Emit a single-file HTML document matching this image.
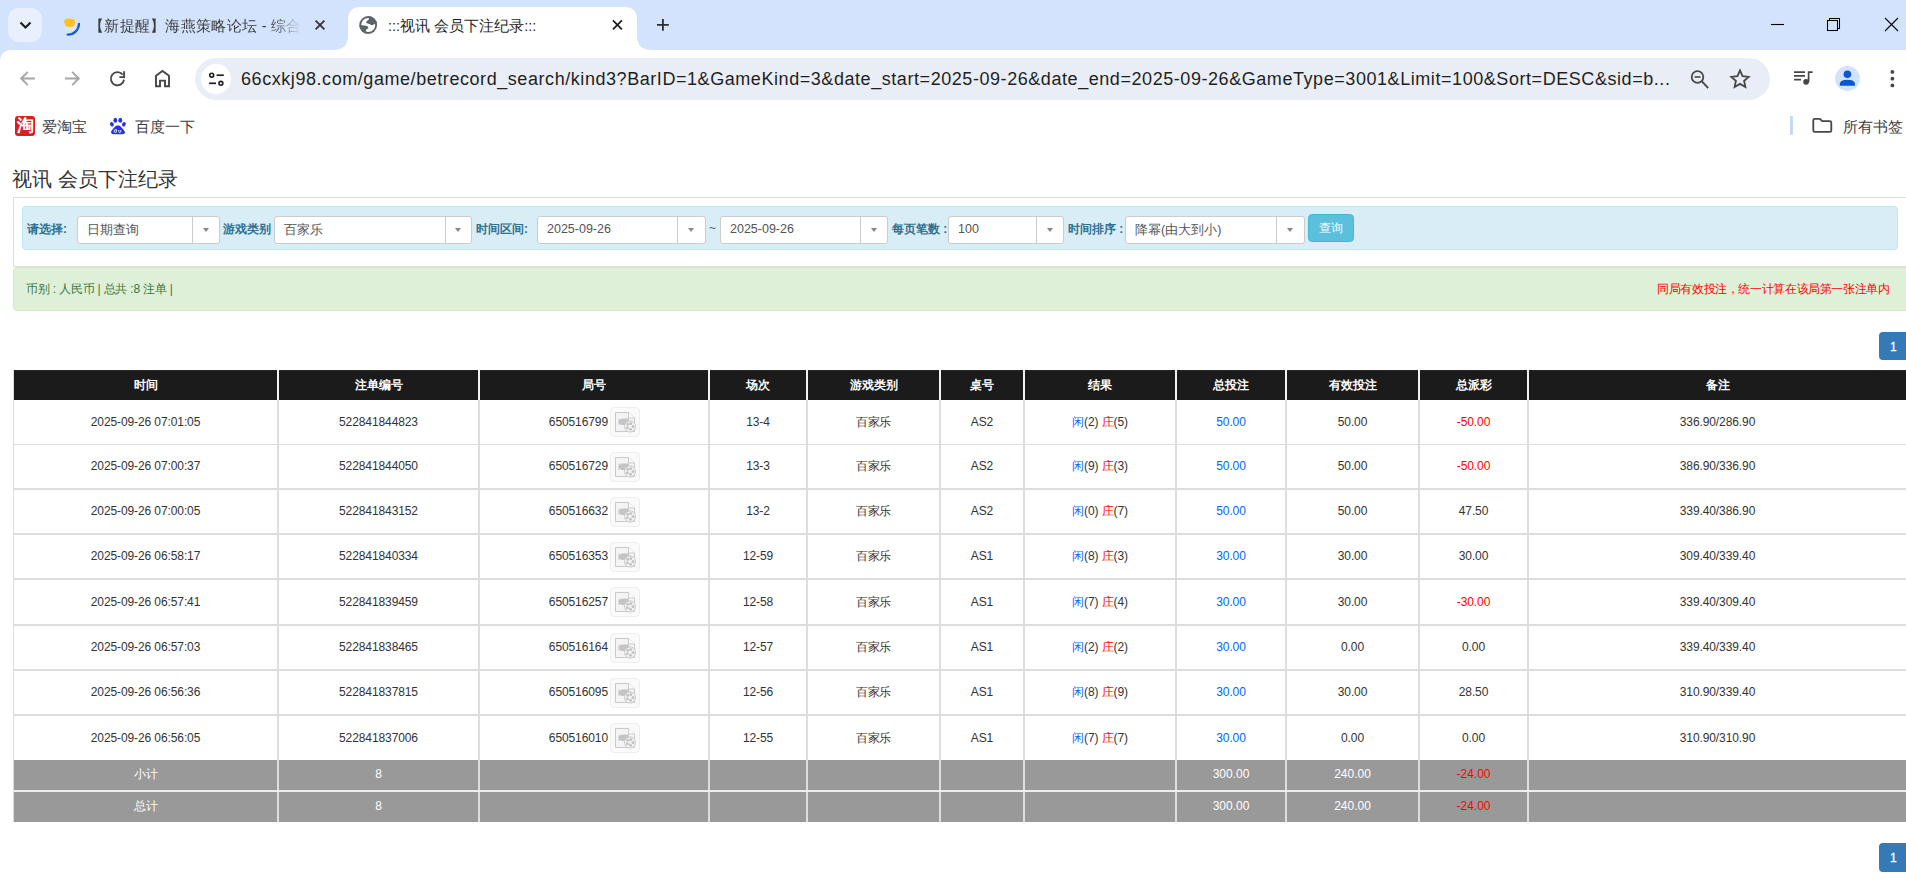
<!DOCTYPE html>
<html><head><meta charset="utf-8">
<style>
*{box-sizing:border-box}
html,body{margin:0;padding:0;width:1906px;height:885px;overflow:hidden;background:#fff;font-family:"Liberation Sans",sans-serif}
.a{position:absolute;white-space:nowrap}
#tabs{position:absolute;left:0;top:0;width:1906px;height:60px;background:#d3e3fd}
#tbar{position:absolute;left:0;top:50px;width:1906px;height:95px;background:#fff;border-top-left-radius:10px}
svg{position:absolute;overflow:visible}
.lbl{font-size:12px;font-weight:bold;color:#31708f}
.sel{top:216px;height:28px;border:1px solid #ccc;border-radius:3px;background:#fff}
.sel .st{position:absolute;left:9px;top:5px;font-size:12.5px;color:#555;white-space:nowrap}
.sel i{position:absolute;top:0;width:1px;height:26px;background:#ccc}
.sel b{position:absolute;top:11px;width:0;height:0;border-left:3.5px solid transparent;border-right:3.5px solid transparent;border-top:4px solid #888}
.hd{height:30px;line-height:30px;text-align:center;font-size:12px;font-weight:bold;color:#fff;background:#1b1b1b;box-shadow:inset 0 1px 0 #262626}
.cl{background:#fff}
.td{text-align:center;font-size:12px;color:#333;letter-spacing:-0.1px}
.ft{text-align:center;font-size:12px;color:#fff}
.ic{width:30px;height:30px;border:1px solid #eee;border-radius:4px;background:#fafafa}

</style></head><body>
<!-- TAB STRIP -->
<div id="tabs">
  <div class="a" style="left:8px;top:8px;width:34px;height:34px;border-radius:11px;background:#e9f0fd"></div>
  <svg style="left:0;top:0" width="60" height="50"><path d="M20.5 22.5 L25.5 27.5 L30.5 22.5" fill="none" stroke="#1f1f1f" stroke-width="2.2"/></svg>
  <!-- tab1 favicon -->
  <svg style="left:0;top:0" width="90" height="50">
    <path d="M64.5 24 Q64.5 21 68 21 L72.5 21 Q75.5 21 75.5 24 L75.5 29 Q75.5 31 72.5 31 L67.5 31 Q64.5 31 64.5 29 Z" fill="#dfe6f0"/>
    <path d="M64.2 22 Q63.8 19 67.5 18.8 Q71 18.5 73.5 19.2 Q75.6 20 75 23.5 Q74.5 26.5 71 27 Q67.5 27.3 65.8 26 Q64.3 24.5 64.2 22Z" fill="#fcc21b"/>
    <path d="M79 23.8 A11 11 0 0 1 67.6 34.6" fill="none" stroke="#1a5ad8" stroke-width="2.3" stroke-linecap="round"/>
  </svg>
  <div class="a" style="left:89px;top:17px;font-size:14.6px;letter-spacing:0.3px;color:#3c3c3c;width:212px;overflow:hidden;-webkit-mask-image:linear-gradient(90deg,#000 86%,transparent 100%)">【新提醒】海燕策略论坛 - 综合讨论区</div>
  <svg style="left:0;top:0" width="340" height="50"><path d="M315.6 20.6 L324.4 29.4 M324.4 20.6 L315.6 29.4" stroke="#333" stroke-width="1.8"/></svg>
  <!-- active tab -->
  <svg style="left:0;top:0" width="700" height="50"><path d="M332 50 Q348 50 348 36 L348 20 Q348 7 361 7 L624 7 Q637 7 637 20 L637 36 Q637 50 652 50 Z" fill="#fff"/></svg>
  <svg style="left:359px;top:16px" width="18.4" height="18" viewBox="0 0 18.4 18">
    <defs><clipPath id="gc"><circle cx="9.2" cy="9" r="8.9"/></clipPath></defs>
    <circle cx="9.2" cy="9" r="8.9" fill="#5f6368"/>
    <circle cx="9.2" cy="9" r="7" fill="#fff"/>
    <g clip-path="url(#gc)" fill="#5f6368">
      <path d="M10.2 0 L10 2.5 Q9.9 4 8.6 4.5 Q7.2 5.2 7.2 6.3 Q7.3 7.4 8.6 7.6 Q10.5 7.9 11.4 8.6 Q12.3 9.5 13.5 9.1 Q15.5 8.4 18.4 6.5 L18.4 0 Z"/>
      <path d="M0 9.1 L2.2 9.3 Q6.5 9.4 8 9.9 Q9.4 10.6 9.3 11.8 Q9.2 12.8 7.8 13.2 Q6.8 13.6 6.8 14.6 Q6.9 15.5 7.4 16.2 L7.6 18 L0 18 Z"/>
    </g>
  </svg>
  <div class="a" style="left:388px;top:17px;font-size:14.6px;color:#1f1f1f">:::视讯 会员下注纪录:::</div>
  <svg style="left:0;top:0" width="700" height="50"><path d="M612.9 20.3 L621.9 29.3 M621.9 20.3 L612.9 29.3" stroke="#1f1f1f" stroke-width="1.8"/>
  <path d="M657 24.9 L668.8 24.9 M662.9 19 L662.9 30.8" stroke="#2d2d2d" stroke-width="1.8"/></svg>
  <!-- window controls -->
  <svg style="left:0;top:0" width="1906" height="50">
    <path d="M1771 24.5 L1784 24.5" stroke="#000" stroke-width="1.1"/>
    <rect x="1827.5" y="20.5" width="10" height="10" fill="none" stroke="#000" stroke-width="1.05"/>
    <path d="M1829.5 20.5 L1829.5 18.5 L1839.5 18.5 L1839.5 28.5 L1837.5 28.5" fill="none" stroke="#000" stroke-width="1.05"/>
    <path d="M1885 18 L1898 31 M1898 18 L1885 31" stroke="#000" stroke-width="1.1"/>
  </svg>
</div>
<!-- TOOLBAR -->
<div id="tbar">
  <svg style="left:0;top:0" width="1906" height="95">
    <!-- back -->
    <path d="M35 28.5 L21.2 28.5 M27.8 21.9 L21.2 28.5 L27.8 35.1" fill="none" stroke="#a6a6a6" stroke-width="1.9"/>
    <!-- forward -->
    <path d="M65 28.5 L78.8 28.5 M72.2 21.9 L78.8 28.5 L72.2 35.1" fill="none" stroke="#a6a6a6" stroke-width="1.9"/>
    <!-- reload -->
    <path d="M124.04 29.62 A6.6 6.6 0 1 1 122.63 24.55" fill="none" stroke="#474747" stroke-width="1.9"/>
    <path d="M124.1 21.3 L124.1 27.1 L119.4 27.1" fill="none" stroke="#474747" stroke-width="1.9"/>
    <!-- home -->
    <path d="M156 36.3 L156 25.8 L162.5 21 L169 25.8 L169 36.3 L165 36.3 L165 30.6 L160 30.6 L160 36.3 Z" fill="none" stroke="#474747" stroke-width="1.9" stroke-linejoin="miter"/>
  </svg>
  <div class="a" style="left:195px;top:8px;width:1575px;height:42px;border-radius:21px;background:#e9eef6"></div>
  <div class="a" style="left:201px;top:14px;width:30px;height:30px;border-radius:15px;background:#fff"></div>
  <svg style="left:0;top:0" width="1906" height="95">
    <circle cx="211.7" cy="25.2" r="1.95" fill="none" stroke="#1f1f1f" stroke-width="1.6"/>
    <path d="M216.6 25.2 L223.8 25.2" stroke="#1f1f1f" stroke-width="1.7"/>
    <circle cx="220.9" cy="33.3" r="1.95" fill="none" stroke="#1f1f1f" stroke-width="1.6"/>
    <path d="M209.1 33.3 L216 33.3" stroke="#1f1f1f" stroke-width="1.7"/>
  </svg>
  <div class="a" style="left:241px;top:19px;font-size:18px;color:#1f1f1f;letter-spacing:0.56px" id="url">66cxkj98.com/game/betrecord_search/kind3?BarID=1&amp;GameKind=3&amp;date_start=2025-09-26&amp;date_end=2025-09-26&amp;GameType=3001&amp;Limit=100&amp;Sort=DESC&amp;sid=b...</div>
  <svg style="left:0;top:0" width="1906" height="95">
    <!-- zoom out -->
    <circle cx="1697.5" cy="27" r="5.8" fill="none" stroke="#474747" stroke-width="1.8"/>
    <path d="M1694.5 27 L1700.5 27" stroke="#474747" stroke-width="1.6"/>
    <path d="M1701.7 31.2 L1708.2 38.2" stroke="#474747" stroke-width="1.9"/>
    <!-- star -->
    <path d="M1740.0 20.4 L1742.5 26.1 L1748.7 26.8 L1744.1 30.9 L1745.4 37.0 L1740.0 33.9 L1734.6 37.0 L1735.9 30.9 L1731.3 26.8 L1737.5 26.1 Z" fill="none" stroke="#474747" stroke-width="1.8" stroke-linejoin="miter"/>
    <!-- media -->
    <path d="M1794 22.1 L1805 22.1 M1794 25.9 L1805 25.9 M1794 29.7 L1801 29.7" stroke="#474747" stroke-width="1.7"/>
    <path d="M1808.6 32 L1808.6 21.3 M1808 22.1 L1812.6 22.1" fill="none" stroke="#474747" stroke-width="1.7"/>
    <circle cx="1806.1" cy="31.8" r="2.9" fill="#474747"/>
    <!-- avatar -->
    <circle cx="1847.5" cy="28.5" r="12.5" fill="#d3e3fd"/>
    <circle cx="1847.4" cy="24.2" r="3.8" fill="#0b57d0"/>
    <path d="M1839.8 35.8 L1839.8 33.6 Q1840.3 29.8 1847.4 29.8 Q1854.5 29.8 1855 33.6 L1855 35.8 Z" fill="#0b57d0"/>
    <!-- menu -->
    <circle cx="1892.4" cy="21.9" r="1.9" fill="#474747"/>
    <circle cx="1892.4" cy="28.7" r="1.9" fill="#474747"/>
    <circle cx="1892.4" cy="35.4" r="1.9" fill="#474747"/>
  </svg>
  <!-- bookmarks -->
  <div class="a" style="left:15px;top:66px;width:20px;height:20px;border-radius:3px;background:#d81e28"></div>
  <div class="a" style="left:15px;top:64px;width:20px;height:20px;font-size:17px;line-height:24px;text-align:center;color:#fff;font-weight:bold">淘</div>
  <div class="a" style="left:42px;top:68px;font-size:15px;color:#3c3c3c">爱淘宝</div>
  <svg style="left:0;top:0" width="300" height="95">
    <ellipse cx="115.3" cy="70.2" rx="1.9" ry="2.5" fill="#2932e1"/>
    <ellipse cx="120.3" cy="70.2" rx="1.9" ry="2.5" fill="#2932e1"/>
    <ellipse cx="111.9" cy="74.3" rx="1.8" ry="2.3" fill="#2932e1" transform="rotate(-25 111.9 74.3)"/>
    <ellipse cx="123.9" cy="74.3" rx="1.8" ry="2.3" fill="#2932e1" transform="rotate(25 123.9 74.3)"/>
    <path d="M117.9 75.3 Q115.5 75.3 113.8 78 Q111 81 111 82.5 Q111 84.3 113.5 84.3 L122.5 84.3 Q125 84.3 125 82.5 Q125 81 122 78 Q120.3 75.3 117.9 75.3Z" fill="#2932e1"/>
    <path d="M116.3 79 L116.3 82.3 M116.3 82.3 A1.4 1.4 0 1 1 116.3 80 M118.8 80 L118.8 81.6 Q118.8 82.5 119.8 82.5 Q120.8 82.5 120.8 81.6 L120.8 80" fill="none" stroke="#fff" stroke-width="0.9"/>
  </svg>
  <div class="a" style="left:135px;top:68px;font-size:15px;color:#3c3c3c">百度一下</div>
  <div class="a" style="left:1790px;top:66px;width:2.5px;height:19px;border-radius:1px;background:#c7d7f7"></div>
  <svg style="left:0;top:0" width="1906" height="95">
    <path d="M1813.3 70.3 Q1813.3 68.8 1814.8 68.8 L1820 68.8 L1822.2 71.2 L1829.8 71.2 Q1831.3 71.2 1831.3 72.7 L1831.3 80.4 Q1831.3 81.9 1829.8 81.9 L1814.8 81.9 Q1813.3 81.9 1813.3 80.4 Z" fill="none" stroke="#474747" stroke-width="1.8" stroke-linejoin="round"/>
  </svg>
  <div class="a" style="left:1843px;top:68px;font-size:15px;color:#3c3c3c">所有书签</div>
</div>
<!-- PAGE -->
<div class="a" id="ttl" style="left:12px;top:166px;font-size:20px;color:#333">视讯 会员下注纪录</div>
<div class="a" style="left:13px;top:197px;width:1910px;height:70px;border:1px solid #ddd;border-right:0"></div>
<div class="a" style="left:22px;top:206px;width:1876px;height:44px;border:1px solid #bce8f1;background:#d9edf7;border-radius:4px"></div>
<div class="a lbl" style="left:27px;top:221px">请选择:</div>
<div class="a lbl" style="left:223px;top:221px">游戏类别</div>
<div class="a lbl" style="left:476px;top:221px">时间区间:</div>
<div class="a lbl" style="left:892px;top:221px">每页笔数 :</div>
<div class="a lbl" style="left:1068px;top:221px">时间排序 :</div>
<div class="a" style="left:709px;top:221px;font-size:12px;color:#31708f">~</div>
<div class="a sel" style="left:77px;width:143px"><span class="st">日期查询</span><i style="left:114px"></i><b style="left:125px"></b></div>
<div class="a sel" style="left:274px;width:198px"><span class="st">百家乐</span><i style="left:170px"></i><b style="left:180px"></b></div>
<div class="a sel" style="left:537px;width:169px"><span class="st">2025-09-26</span><i style="left:139px"></i><b style="left:150px"></b></div>
<div class="a sel" style="left:720px;width:168px"><span class="st">2025-09-26</span><i style="left:139px"></i><b style="left:150px"></b></div>
<div class="a sel" style="left:948px;width:116px"><span class="st">100</span><i style="left:87px"></i><b style="left:98px"></b></div>
<div class="a sel" style="left:1125px;width:180px"><span class="st">降幂(由大到小)</span><i style="left:150px"></i><b style="left:161px"></b></div>
<div class="a" style="left:1308px;top:214px;width:46px;height:28px;border-radius:4px;background:#5bc0de;border:1px solid #46b8da"></div>
<div class="a" style="left:1319px;top:220px;font-size:12px;color:#fff">查询</div>
<div class="a" style="left:13px;top:267px;width:1910px;height:44px;border:1px solid #d6e9c6;background:#dff0d8;border-radius:4px"></div>
<div class="a" style="left:26px;top:281px;font-size:12px;letter-spacing:-0.2px;color:#3c763d">币别 : 人民币 | 总共 :8 注单 |</div>
<div class="a" style="left:1657px;top:281px;font-size:12px;letter-spacing:-0.37px;color:#f00">同局有效投注，统一计算在该局第一张注单内</div>
<div class="a" style="left:1879px;top:332px;width:40px;height:28px;border-radius:4px;background:#337ab7"></div>
<div class="a" style="left:1890px;top:340px;font-size:12px;color:#fff;-webkit-text-stroke:0.3px #fff">1</div>
<div class="a" style="left:1879px;top:843px;width:40px;height:29px;border-radius:4px;background:#337ab7"></div>
<div class="a" style="left:1890px;top:851px;font-size:12px;color:#fff;-webkit-text-stroke:0.3px #fff">1</div>
<div class="a" style="left:13px;top:370px;width:1893px;height:452px;background:#ddd"></div>
<div class="a" style="left:14px;top:370px;width:1892px;height:30px;background:#f2f2f2"></div>
<div class="a hd" style="left:14px;top:370px;width:263px">时间</div>
<div class="a hd" style="left:279px;top:370px;width:199px">注单编号</div>
<div class="a hd" style="left:480px;top:370px;width:228px">局号</div>
<div class="a hd" style="left:710px;top:370px;width:96px">场次</div>
<div class="a hd" style="left:808px;top:370px;width:131px">游戏类别</div>
<div class="a hd" style="left:941px;top:370px;width:82px">桌号</div>
<div class="a hd" style="left:1025px;top:370px;width:150px">结果</div>
<div class="a hd" style="left:1177px;top:370px;width:108px">总投注</div>
<div class="a hd" style="left:1287px;top:370px;width:131px">有效投注</div>
<div class="a hd" style="left:1420px;top:370px;width:107px">总派彩</div>
<div class="a hd" style="left:1529px;top:370px;width:377px">备注</div>
<div class="a cl" style="left:14px;top:400px;width:263px;height:44px"></div>
<div class="a cl" style="left:279px;top:400px;width:199px;height:44px"></div>
<div class="a cl" style="left:480px;top:400px;width:228px;height:44px"></div>
<div class="a cl" style="left:710px;top:400px;width:96px;height:44px"></div>
<div class="a cl" style="left:808px;top:400px;width:131px;height:44px"></div>
<div class="a cl" style="left:941px;top:400px;width:82px;height:44px"></div>
<div class="a cl" style="left:1025px;top:400px;width:150px;height:44px"></div>
<div class="a cl" style="left:1177px;top:400px;width:108px;height:44px"></div>
<div class="a cl" style="left:1287px;top:400px;width:131px;height:44px"></div>
<div class="a cl" style="left:1420px;top:400px;width:107px;height:44px"></div>
<div class="a cl" style="left:1529px;top:400px;width:377px;height:44px"></div>
<div class="a td" style="left:14px;top:400px;width:263px;height:44px;line-height:44px;">2025-09-26 07:01:05</div>
<div class="a td" style="left:279px;top:400px;width:199px;height:44px;line-height:44px;">522841844823</div>
<div class="a td" style="left:480px;top:400px;width:128px;height:44px;line-height:44px;text-align:right">650516799</div>
<div class="a ic" style="left:610px;top:407px"><svg width="29" height="29" style="left:-1px;top:-1px"><path d="M5.5 5.5 L18.5 5.5 L24.5 11 L24.5 24.5 L5.5 24.5 Z" fill="#f4f4f4" stroke="#c9c9c9" stroke-width="1"/><path d="M18.5 5.5 L18.5 11 L24.5 11" fill="#fff" stroke="#c9c9c9" stroke-width="1"/><path d="M8.5 11.5 L10.5 13 L10.5 11.5 L19 11.5 L19 18 L10.5 18 L10.5 16.5 L8.5 18 Z" fill="#c4c4c4"/><circle cx="20" cy="19.5" r="5.6" fill="#f4f4f4" stroke="#c9c9c9" stroke-width="1"/><circle cx="17.8" cy="17.3" r="1.5" fill="#c4c4c4"/><circle cx="20.8" cy="16.6" r="1.5" fill="#c4c4c4"/><circle cx="23" cy="19.5" r="1.5" fill="#c4c4c4"/><circle cx="20.5" cy="22.3" r="1.5" fill="#c4c4c4"/><circle cx="17.3" cy="20.8" r="1.5" fill="#c4c4c4"/></svg></div>
<div class="a td" style="left:710px;top:400px;width:96px;height:44px;line-height:44px;">13-4</div>
<div class="a td" style="left:808px;top:400px;width:131px;height:44px;line-height:44px;">百家乐</div>
<div class="a td" style="left:941px;top:400px;width:82px;height:44px;line-height:44px;">AS2</div>
<div class="a td" style="left:1025px;top:400px;width:150px;height:44px;line-height:44px;"><span style="color:#06f">闲</span>(2) <span style="color:#f00">庄</span>(5)</div>
<div class="a td" style="left:1177px;top:400px;width:108px;height:44px;line-height:44px;color:#06f;">50.00</div>
<div class="a td" style="left:1287px;top:400px;width:131px;height:44px;line-height:44px;">50.00</div>
<div class="a td" style="left:1420px;top:400px;width:107px;height:44px;line-height:44px;color:#f00;">-50.00</div>
<div class="a td" style="left:1529px;top:400px;width:377px;height:44px;line-height:44px;">336.90/286.90</div>
<div class="a cl" style="left:14px;top:445px;width:263px;height:43px"></div>
<div class="a cl" style="left:279px;top:445px;width:199px;height:43px"></div>
<div class="a cl" style="left:480px;top:445px;width:228px;height:43px"></div>
<div class="a cl" style="left:710px;top:445px;width:96px;height:43px"></div>
<div class="a cl" style="left:808px;top:445px;width:131px;height:43px"></div>
<div class="a cl" style="left:941px;top:445px;width:82px;height:43px"></div>
<div class="a cl" style="left:1025px;top:445px;width:150px;height:43px"></div>
<div class="a cl" style="left:1177px;top:445px;width:108px;height:43px"></div>
<div class="a cl" style="left:1287px;top:445px;width:131px;height:43px"></div>
<div class="a cl" style="left:1420px;top:445px;width:107px;height:43px"></div>
<div class="a cl" style="left:1529px;top:445px;width:377px;height:43px"></div>
<div class="a td" style="left:14px;top:445px;width:263px;height:43px;line-height:43px;">2025-09-26 07:00:37</div>
<div class="a td" style="left:279px;top:445px;width:199px;height:43px;line-height:43px;">522841844050</div>
<div class="a td" style="left:480px;top:445px;width:128px;height:43px;line-height:43px;text-align:right">650516729</div>
<div class="a ic" style="left:610px;top:452px"><svg width="29" height="29" style="left:-1px;top:-1px"><path d="M5.5 5.5 L18.5 5.5 L24.5 11 L24.5 24.5 L5.5 24.5 Z" fill="#f4f4f4" stroke="#c9c9c9" stroke-width="1"/><path d="M18.5 5.5 L18.5 11 L24.5 11" fill="#fff" stroke="#c9c9c9" stroke-width="1"/><path d="M8.5 11.5 L10.5 13 L10.5 11.5 L19 11.5 L19 18 L10.5 18 L10.5 16.5 L8.5 18 Z" fill="#c4c4c4"/><circle cx="20" cy="19.5" r="5.6" fill="#f4f4f4" stroke="#c9c9c9" stroke-width="1"/><circle cx="17.8" cy="17.3" r="1.5" fill="#c4c4c4"/><circle cx="20.8" cy="16.6" r="1.5" fill="#c4c4c4"/><circle cx="23" cy="19.5" r="1.5" fill="#c4c4c4"/><circle cx="20.5" cy="22.3" r="1.5" fill="#c4c4c4"/><circle cx="17.3" cy="20.8" r="1.5" fill="#c4c4c4"/></svg></div>
<div class="a td" style="left:710px;top:445px;width:96px;height:43px;line-height:43px;">13-3</div>
<div class="a td" style="left:808px;top:445px;width:131px;height:43px;line-height:43px;">百家乐</div>
<div class="a td" style="left:941px;top:445px;width:82px;height:43px;line-height:43px;">AS2</div>
<div class="a td" style="left:1025px;top:445px;width:150px;height:43px;line-height:43px;"><span style="color:#06f">闲</span>(9) <span style="color:#f00">庄</span>(3)</div>
<div class="a td" style="left:1177px;top:445px;width:108px;height:43px;line-height:43px;color:#06f;">50.00</div>
<div class="a td" style="left:1287px;top:445px;width:131px;height:43px;line-height:43px;">50.00</div>
<div class="a td" style="left:1420px;top:445px;width:107px;height:43px;line-height:43px;color:#f00;">-50.00</div>
<div class="a td" style="left:1529px;top:445px;width:377px;height:43px;line-height:43px;">386.90/336.90</div>
<div class="a cl" style="left:14px;top:490px;width:263px;height:43px"></div>
<div class="a cl" style="left:279px;top:490px;width:199px;height:43px"></div>
<div class="a cl" style="left:480px;top:490px;width:228px;height:43px"></div>
<div class="a cl" style="left:710px;top:490px;width:96px;height:43px"></div>
<div class="a cl" style="left:808px;top:490px;width:131px;height:43px"></div>
<div class="a cl" style="left:941px;top:490px;width:82px;height:43px"></div>
<div class="a cl" style="left:1025px;top:490px;width:150px;height:43px"></div>
<div class="a cl" style="left:1177px;top:490px;width:108px;height:43px"></div>
<div class="a cl" style="left:1287px;top:490px;width:131px;height:43px"></div>
<div class="a cl" style="left:1420px;top:490px;width:107px;height:43px"></div>
<div class="a cl" style="left:1529px;top:490px;width:377px;height:43px"></div>
<div class="a td" style="left:14px;top:490px;width:263px;height:43px;line-height:43px;">2025-09-26 07:00:05</div>
<div class="a td" style="left:279px;top:490px;width:199px;height:43px;line-height:43px;">522841843152</div>
<div class="a td" style="left:480px;top:490px;width:128px;height:43px;line-height:43px;text-align:right">650516632</div>
<div class="a ic" style="left:610px;top:497px"><svg width="29" height="29" style="left:-1px;top:-1px"><path d="M5.5 5.5 L18.5 5.5 L24.5 11 L24.5 24.5 L5.5 24.5 Z" fill="#f4f4f4" stroke="#c9c9c9" stroke-width="1"/><path d="M18.5 5.5 L18.5 11 L24.5 11" fill="#fff" stroke="#c9c9c9" stroke-width="1"/><path d="M8.5 11.5 L10.5 13 L10.5 11.5 L19 11.5 L19 18 L10.5 18 L10.5 16.5 L8.5 18 Z" fill="#c4c4c4"/><circle cx="20" cy="19.5" r="5.6" fill="#f4f4f4" stroke="#c9c9c9" stroke-width="1"/><circle cx="17.8" cy="17.3" r="1.5" fill="#c4c4c4"/><circle cx="20.8" cy="16.6" r="1.5" fill="#c4c4c4"/><circle cx="23" cy="19.5" r="1.5" fill="#c4c4c4"/><circle cx="20.5" cy="22.3" r="1.5" fill="#c4c4c4"/><circle cx="17.3" cy="20.8" r="1.5" fill="#c4c4c4"/></svg></div>
<div class="a td" style="left:710px;top:490px;width:96px;height:43px;line-height:43px;">13-2</div>
<div class="a td" style="left:808px;top:490px;width:131px;height:43px;line-height:43px;">百家乐</div>
<div class="a td" style="left:941px;top:490px;width:82px;height:43px;line-height:43px;">AS2</div>
<div class="a td" style="left:1025px;top:490px;width:150px;height:43px;line-height:43px;"><span style="color:#06f">闲</span>(0) <span style="color:#f00">庄</span>(7)</div>
<div class="a td" style="left:1177px;top:490px;width:108px;height:43px;line-height:43px;color:#06f;">50.00</div>
<div class="a td" style="left:1287px;top:490px;width:131px;height:43px;line-height:43px;">50.00</div>
<div class="a td" style="left:1420px;top:490px;width:107px;height:43px;line-height:43px;">47.50</div>
<div class="a td" style="left:1529px;top:490px;width:377px;height:43px;line-height:43px;">339.40/386.90</div>
<div class="a cl" style="left:14px;top:535px;width:263px;height:43px"></div>
<div class="a cl" style="left:279px;top:535px;width:199px;height:43px"></div>
<div class="a cl" style="left:480px;top:535px;width:228px;height:43px"></div>
<div class="a cl" style="left:710px;top:535px;width:96px;height:43px"></div>
<div class="a cl" style="left:808px;top:535px;width:131px;height:43px"></div>
<div class="a cl" style="left:941px;top:535px;width:82px;height:43px"></div>
<div class="a cl" style="left:1025px;top:535px;width:150px;height:43px"></div>
<div class="a cl" style="left:1177px;top:535px;width:108px;height:43px"></div>
<div class="a cl" style="left:1287px;top:535px;width:131px;height:43px"></div>
<div class="a cl" style="left:1420px;top:535px;width:107px;height:43px"></div>
<div class="a cl" style="left:1529px;top:535px;width:377px;height:43px"></div>
<div class="a td" style="left:14px;top:535px;width:263px;height:43px;line-height:43px;">2025-09-26 06:58:17</div>
<div class="a td" style="left:279px;top:535px;width:199px;height:43px;line-height:43px;">522841840334</div>
<div class="a td" style="left:480px;top:535px;width:128px;height:43px;line-height:43px;text-align:right">650516353</div>
<div class="a ic" style="left:610px;top:542px"><svg width="29" height="29" style="left:-1px;top:-1px"><path d="M5.5 5.5 L18.5 5.5 L24.5 11 L24.5 24.5 L5.5 24.5 Z" fill="#f4f4f4" stroke="#c9c9c9" stroke-width="1"/><path d="M18.5 5.5 L18.5 11 L24.5 11" fill="#fff" stroke="#c9c9c9" stroke-width="1"/><path d="M8.5 11.5 L10.5 13 L10.5 11.5 L19 11.5 L19 18 L10.5 18 L10.5 16.5 L8.5 18 Z" fill="#c4c4c4"/><circle cx="20" cy="19.5" r="5.6" fill="#f4f4f4" stroke="#c9c9c9" stroke-width="1"/><circle cx="17.8" cy="17.3" r="1.5" fill="#c4c4c4"/><circle cx="20.8" cy="16.6" r="1.5" fill="#c4c4c4"/><circle cx="23" cy="19.5" r="1.5" fill="#c4c4c4"/><circle cx="20.5" cy="22.3" r="1.5" fill="#c4c4c4"/><circle cx="17.3" cy="20.8" r="1.5" fill="#c4c4c4"/></svg></div>
<div class="a td" style="left:710px;top:535px;width:96px;height:43px;line-height:43px;">12-59</div>
<div class="a td" style="left:808px;top:535px;width:131px;height:43px;line-height:43px;">百家乐</div>
<div class="a td" style="left:941px;top:535px;width:82px;height:43px;line-height:43px;">AS1</div>
<div class="a td" style="left:1025px;top:535px;width:150px;height:43px;line-height:43px;"><span style="color:#06f">闲</span>(8) <span style="color:#f00">庄</span>(3)</div>
<div class="a td" style="left:1177px;top:535px;width:108px;height:43px;line-height:43px;color:#06f;">30.00</div>
<div class="a td" style="left:1287px;top:535px;width:131px;height:43px;line-height:43px;">30.00</div>
<div class="a td" style="left:1420px;top:535px;width:107px;height:43px;line-height:43px;">30.00</div>
<div class="a td" style="left:1529px;top:535px;width:377px;height:43px;line-height:43px;">309.40/339.40</div>
<div class="a cl" style="left:14px;top:580px;width:263px;height:44px"></div>
<div class="a cl" style="left:279px;top:580px;width:199px;height:44px"></div>
<div class="a cl" style="left:480px;top:580px;width:228px;height:44px"></div>
<div class="a cl" style="left:710px;top:580px;width:96px;height:44px"></div>
<div class="a cl" style="left:808px;top:580px;width:131px;height:44px"></div>
<div class="a cl" style="left:941px;top:580px;width:82px;height:44px"></div>
<div class="a cl" style="left:1025px;top:580px;width:150px;height:44px"></div>
<div class="a cl" style="left:1177px;top:580px;width:108px;height:44px"></div>
<div class="a cl" style="left:1287px;top:580px;width:131px;height:44px"></div>
<div class="a cl" style="left:1420px;top:580px;width:107px;height:44px"></div>
<div class="a cl" style="left:1529px;top:580px;width:377px;height:44px"></div>
<div class="a td" style="left:14px;top:580px;width:263px;height:44px;line-height:44px;">2025-09-26 06:57:41</div>
<div class="a td" style="left:279px;top:580px;width:199px;height:44px;line-height:44px;">522841839459</div>
<div class="a td" style="left:480px;top:580px;width:128px;height:44px;line-height:44px;text-align:right">650516257</div>
<div class="a ic" style="left:610px;top:587px"><svg width="29" height="29" style="left:-1px;top:-1px"><path d="M5.5 5.5 L18.5 5.5 L24.5 11 L24.5 24.5 L5.5 24.5 Z" fill="#f4f4f4" stroke="#c9c9c9" stroke-width="1"/><path d="M18.5 5.5 L18.5 11 L24.5 11" fill="#fff" stroke="#c9c9c9" stroke-width="1"/><path d="M8.5 11.5 L10.5 13 L10.5 11.5 L19 11.5 L19 18 L10.5 18 L10.5 16.5 L8.5 18 Z" fill="#c4c4c4"/><circle cx="20" cy="19.5" r="5.6" fill="#f4f4f4" stroke="#c9c9c9" stroke-width="1"/><circle cx="17.8" cy="17.3" r="1.5" fill="#c4c4c4"/><circle cx="20.8" cy="16.6" r="1.5" fill="#c4c4c4"/><circle cx="23" cy="19.5" r="1.5" fill="#c4c4c4"/><circle cx="20.5" cy="22.3" r="1.5" fill="#c4c4c4"/><circle cx="17.3" cy="20.8" r="1.5" fill="#c4c4c4"/></svg></div>
<div class="a td" style="left:710px;top:580px;width:96px;height:44px;line-height:44px;">12-58</div>
<div class="a td" style="left:808px;top:580px;width:131px;height:44px;line-height:44px;">百家乐</div>
<div class="a td" style="left:941px;top:580px;width:82px;height:44px;line-height:44px;">AS1</div>
<div class="a td" style="left:1025px;top:580px;width:150px;height:44px;line-height:44px;"><span style="color:#06f">闲</span>(7) <span style="color:#f00">庄</span>(4)</div>
<div class="a td" style="left:1177px;top:580px;width:108px;height:44px;line-height:44px;color:#06f;">30.00</div>
<div class="a td" style="left:1287px;top:580px;width:131px;height:44px;line-height:44px;">30.00</div>
<div class="a td" style="left:1420px;top:580px;width:107px;height:44px;line-height:44px;color:#f00;">-30.00</div>
<div class="a td" style="left:1529px;top:580px;width:377px;height:44px;line-height:44px;">339.40/309.40</div>
<div class="a cl" style="left:14px;top:626px;width:263px;height:43px"></div>
<div class="a cl" style="left:279px;top:626px;width:199px;height:43px"></div>
<div class="a cl" style="left:480px;top:626px;width:228px;height:43px"></div>
<div class="a cl" style="left:710px;top:626px;width:96px;height:43px"></div>
<div class="a cl" style="left:808px;top:626px;width:131px;height:43px"></div>
<div class="a cl" style="left:941px;top:626px;width:82px;height:43px"></div>
<div class="a cl" style="left:1025px;top:626px;width:150px;height:43px"></div>
<div class="a cl" style="left:1177px;top:626px;width:108px;height:43px"></div>
<div class="a cl" style="left:1287px;top:626px;width:131px;height:43px"></div>
<div class="a cl" style="left:1420px;top:626px;width:107px;height:43px"></div>
<div class="a cl" style="left:1529px;top:626px;width:377px;height:43px"></div>
<div class="a td" style="left:14px;top:626px;width:263px;height:43px;line-height:43px;">2025-09-26 06:57:03</div>
<div class="a td" style="left:279px;top:626px;width:199px;height:43px;line-height:43px;">522841838465</div>
<div class="a td" style="left:480px;top:626px;width:128px;height:43px;line-height:43px;text-align:right">650516164</div>
<div class="a ic" style="left:610px;top:633px"><svg width="29" height="29" style="left:-1px;top:-1px"><path d="M5.5 5.5 L18.5 5.5 L24.5 11 L24.5 24.5 L5.5 24.5 Z" fill="#f4f4f4" stroke="#c9c9c9" stroke-width="1"/><path d="M18.5 5.5 L18.5 11 L24.5 11" fill="#fff" stroke="#c9c9c9" stroke-width="1"/><path d="M8.5 11.5 L10.5 13 L10.5 11.5 L19 11.5 L19 18 L10.5 18 L10.5 16.5 L8.5 18 Z" fill="#c4c4c4"/><circle cx="20" cy="19.5" r="5.6" fill="#f4f4f4" stroke="#c9c9c9" stroke-width="1"/><circle cx="17.8" cy="17.3" r="1.5" fill="#c4c4c4"/><circle cx="20.8" cy="16.6" r="1.5" fill="#c4c4c4"/><circle cx="23" cy="19.5" r="1.5" fill="#c4c4c4"/><circle cx="20.5" cy="22.3" r="1.5" fill="#c4c4c4"/><circle cx="17.3" cy="20.8" r="1.5" fill="#c4c4c4"/></svg></div>
<div class="a td" style="left:710px;top:626px;width:96px;height:43px;line-height:43px;">12-57</div>
<div class="a td" style="left:808px;top:626px;width:131px;height:43px;line-height:43px;">百家乐</div>
<div class="a td" style="left:941px;top:626px;width:82px;height:43px;line-height:43px;">AS1</div>
<div class="a td" style="left:1025px;top:626px;width:150px;height:43px;line-height:43px;"><span style="color:#06f">闲</span>(2) <span style="color:#f00">庄</span>(2)</div>
<div class="a td" style="left:1177px;top:626px;width:108px;height:43px;line-height:43px;color:#06f;">30.00</div>
<div class="a td" style="left:1287px;top:626px;width:131px;height:43px;line-height:43px;">0.00</div>
<div class="a td" style="left:1420px;top:626px;width:107px;height:43px;line-height:43px;">0.00</div>
<div class="a td" style="left:1529px;top:626px;width:377px;height:43px;line-height:43px;">339.40/339.40</div>
<div class="a cl" style="left:14px;top:671px;width:263px;height:43px"></div>
<div class="a cl" style="left:279px;top:671px;width:199px;height:43px"></div>
<div class="a cl" style="left:480px;top:671px;width:228px;height:43px"></div>
<div class="a cl" style="left:710px;top:671px;width:96px;height:43px"></div>
<div class="a cl" style="left:808px;top:671px;width:131px;height:43px"></div>
<div class="a cl" style="left:941px;top:671px;width:82px;height:43px"></div>
<div class="a cl" style="left:1025px;top:671px;width:150px;height:43px"></div>
<div class="a cl" style="left:1177px;top:671px;width:108px;height:43px"></div>
<div class="a cl" style="left:1287px;top:671px;width:131px;height:43px"></div>
<div class="a cl" style="left:1420px;top:671px;width:107px;height:43px"></div>
<div class="a cl" style="left:1529px;top:671px;width:377px;height:43px"></div>
<div class="a td" style="left:14px;top:671px;width:263px;height:43px;line-height:43px;">2025-09-26 06:56:36</div>
<div class="a td" style="left:279px;top:671px;width:199px;height:43px;line-height:43px;">522841837815</div>
<div class="a td" style="left:480px;top:671px;width:128px;height:43px;line-height:43px;text-align:right">650516095</div>
<div class="a ic" style="left:610px;top:678px"><svg width="29" height="29" style="left:-1px;top:-1px"><path d="M5.5 5.5 L18.5 5.5 L24.5 11 L24.5 24.5 L5.5 24.5 Z" fill="#f4f4f4" stroke="#c9c9c9" stroke-width="1"/><path d="M18.5 5.5 L18.5 11 L24.5 11" fill="#fff" stroke="#c9c9c9" stroke-width="1"/><path d="M8.5 11.5 L10.5 13 L10.5 11.5 L19 11.5 L19 18 L10.5 18 L10.5 16.5 L8.5 18 Z" fill="#c4c4c4"/><circle cx="20" cy="19.5" r="5.6" fill="#f4f4f4" stroke="#c9c9c9" stroke-width="1"/><circle cx="17.8" cy="17.3" r="1.5" fill="#c4c4c4"/><circle cx="20.8" cy="16.6" r="1.5" fill="#c4c4c4"/><circle cx="23" cy="19.5" r="1.5" fill="#c4c4c4"/><circle cx="20.5" cy="22.3" r="1.5" fill="#c4c4c4"/><circle cx="17.3" cy="20.8" r="1.5" fill="#c4c4c4"/></svg></div>
<div class="a td" style="left:710px;top:671px;width:96px;height:43px;line-height:43px;">12-56</div>
<div class="a td" style="left:808px;top:671px;width:131px;height:43px;line-height:43px;">百家乐</div>
<div class="a td" style="left:941px;top:671px;width:82px;height:43px;line-height:43px;">AS1</div>
<div class="a td" style="left:1025px;top:671px;width:150px;height:43px;line-height:43px;"><span style="color:#06f">闲</span>(8) <span style="color:#f00">庄</span>(9)</div>
<div class="a td" style="left:1177px;top:671px;width:108px;height:43px;line-height:43px;color:#06f;">30.00</div>
<div class="a td" style="left:1287px;top:671px;width:131px;height:43px;line-height:43px;">30.00</div>
<div class="a td" style="left:1420px;top:671px;width:107px;height:43px;line-height:43px;">28.50</div>
<div class="a td" style="left:1529px;top:671px;width:377px;height:43px;line-height:43px;">310.90/339.40</div>
<div class="a cl" style="left:14px;top:716px;width:263px;height:44px"></div>
<div class="a cl" style="left:279px;top:716px;width:199px;height:44px"></div>
<div class="a cl" style="left:480px;top:716px;width:228px;height:44px"></div>
<div class="a cl" style="left:710px;top:716px;width:96px;height:44px"></div>
<div class="a cl" style="left:808px;top:716px;width:131px;height:44px"></div>
<div class="a cl" style="left:941px;top:716px;width:82px;height:44px"></div>
<div class="a cl" style="left:1025px;top:716px;width:150px;height:44px"></div>
<div class="a cl" style="left:1177px;top:716px;width:108px;height:44px"></div>
<div class="a cl" style="left:1287px;top:716px;width:131px;height:44px"></div>
<div class="a cl" style="left:1420px;top:716px;width:107px;height:44px"></div>
<div class="a cl" style="left:1529px;top:716px;width:377px;height:44px"></div>
<div class="a td" style="left:14px;top:716px;width:263px;height:44px;line-height:44px;">2025-09-26 06:56:05</div>
<div class="a td" style="left:279px;top:716px;width:199px;height:44px;line-height:44px;">522841837006</div>
<div class="a td" style="left:480px;top:716px;width:128px;height:44px;line-height:44px;text-align:right">650516010</div>
<div class="a ic" style="left:610px;top:723px"><svg width="29" height="29" style="left:-1px;top:-1px"><path d="M5.5 5.5 L18.5 5.5 L24.5 11 L24.5 24.5 L5.5 24.5 Z" fill="#f4f4f4" stroke="#c9c9c9" stroke-width="1"/><path d="M18.5 5.5 L18.5 11 L24.5 11" fill="#fff" stroke="#c9c9c9" stroke-width="1"/><path d="M8.5 11.5 L10.5 13 L10.5 11.5 L19 11.5 L19 18 L10.5 18 L10.5 16.5 L8.5 18 Z" fill="#c4c4c4"/><circle cx="20" cy="19.5" r="5.6" fill="#f4f4f4" stroke="#c9c9c9" stroke-width="1"/><circle cx="17.8" cy="17.3" r="1.5" fill="#c4c4c4"/><circle cx="20.8" cy="16.6" r="1.5" fill="#c4c4c4"/><circle cx="23" cy="19.5" r="1.5" fill="#c4c4c4"/><circle cx="20.5" cy="22.3" r="1.5" fill="#c4c4c4"/><circle cx="17.3" cy="20.8" r="1.5" fill="#c4c4c4"/></svg></div>
<div class="a td" style="left:710px;top:716px;width:96px;height:44px;line-height:44px;">12-55</div>
<div class="a td" style="left:808px;top:716px;width:131px;height:44px;line-height:44px;">百家乐</div>
<div class="a td" style="left:941px;top:716px;width:82px;height:44px;line-height:44px;">AS1</div>
<div class="a td" style="left:1025px;top:716px;width:150px;height:44px;line-height:44px;"><span style="color:#06f">闲</span>(7) <span style="color:#f00">庄</span>(7)</div>
<div class="a td" style="left:1177px;top:716px;width:108px;height:44px;line-height:44px;color:#06f;">30.00</div>
<div class="a td" style="left:1287px;top:716px;width:131px;height:44px;line-height:44px;">0.00</div>
<div class="a td" style="left:1420px;top:716px;width:107px;height:44px;line-height:44px;">0.00</div>
<div class="a td" style="left:1529px;top:716px;width:377px;height:44px;line-height:44px;">310.90/310.90</div>
<div class="a" style="left:14px;top:760px;width:263px;height:30px;background:#999"></div>
<div class="a" style="left:279px;top:760px;width:199px;height:30px;background:#999"></div>
<div class="a" style="left:480px;top:760px;width:228px;height:30px;background:#999"></div>
<div class="a" style="left:710px;top:760px;width:96px;height:30px;background:#999"></div>
<div class="a" style="left:808px;top:760px;width:131px;height:30px;background:#999"></div>
<div class="a" style="left:941px;top:760px;width:82px;height:30px;background:#999"></div>
<div class="a" style="left:1025px;top:760px;width:150px;height:30px;background:#999"></div>
<div class="a" style="left:1177px;top:760px;width:108px;height:30px;background:#999"></div>
<div class="a" style="left:1287px;top:760px;width:131px;height:30px;background:#999"></div>
<div class="a" style="left:1420px;top:760px;width:107px;height:30px;background:#999"></div>
<div class="a" style="left:1529px;top:760px;width:377px;height:30px;background:#999"></div>
<div class="a ft" style="left:14px;top:759px;width:263px;height:30px;line-height:30px;">小计</div>
<div class="a ft" style="left:279px;top:759px;width:199px;height:30px;line-height:30px;">8</div>
<div class="a ft" style="left:1177px;top:759px;width:108px;height:30px;line-height:30px;">300.00</div>
<div class="a ft" style="left:1287px;top:759px;width:131px;height:30px;line-height:30px;">240.00</div>
<div class="a ft" style="left:1420px;top:759px;width:107px;height:30px;line-height:30px;color:#f00;">-24.00</div>
<div class="a" style="left:14px;top:792px;width:263px;height:30px;background:#999"></div>
<div class="a" style="left:279px;top:792px;width:199px;height:30px;background:#999"></div>
<div class="a" style="left:480px;top:792px;width:228px;height:30px;background:#999"></div>
<div class="a" style="left:710px;top:792px;width:96px;height:30px;background:#999"></div>
<div class="a" style="left:808px;top:792px;width:131px;height:30px;background:#999"></div>
<div class="a" style="left:941px;top:792px;width:82px;height:30px;background:#999"></div>
<div class="a" style="left:1025px;top:792px;width:150px;height:30px;background:#999"></div>
<div class="a" style="left:1177px;top:792px;width:108px;height:30px;background:#999"></div>
<div class="a" style="left:1287px;top:792px;width:131px;height:30px;background:#999"></div>
<div class="a" style="left:1420px;top:792px;width:107px;height:30px;background:#999"></div>
<div class="a" style="left:1529px;top:792px;width:377px;height:30px;background:#999"></div>
<div class="a ft" style="left:14px;top:791px;width:263px;height:30px;line-height:30px;">总计</div>
<div class="a ft" style="left:279px;top:791px;width:199px;height:30px;line-height:30px;">8</div>
<div class="a ft" style="left:1177px;top:791px;width:108px;height:30px;line-height:30px;">300.00</div>
<div class="a ft" style="left:1287px;top:791px;width:131px;height:30px;line-height:30px;">240.00</div>
<div class="a ft" style="left:1420px;top:791px;width:107px;height:30px;line-height:30px;color:#f00;">-24.00</div>
<div class="a" style="left:14px;top:790px;width:1892px;height:2px;background:#eee"></div>
<!-- /PAGE -->
</body></html>
